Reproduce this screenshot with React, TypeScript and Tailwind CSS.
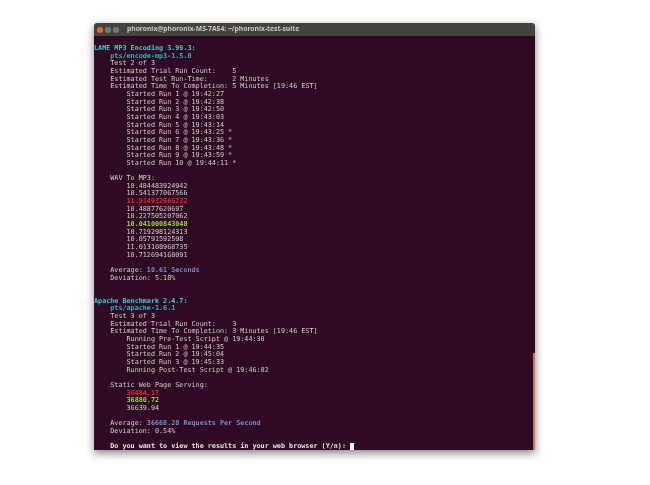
const mono = "font-['DejaVu_Sans_Mono','Liberation_Mono',monospace]";

type Seg = { text: string; color?: string };
type Line = Seg[] | string;

const CYAN = "text-[#45c8cc] font-bold";
const TEAL = "text-[#2fb6ba] font-bold";
const BLUE = "text-[#6f8fc4] font-bold";
const RED = "text-[#e8272c] font-bold";
const GREEN = "text-[#9bd83c] font-bold";

const lines: Line[] = [
  [{ text: "LAME MP3 Encoding 3.99.3:", color: CYAN }],
  [{ text: "    pts/encode-mp3-1.5.0", color: TEAL }],
  "    Test 2 of 3",
  "    Estimated Trial Run Count:    5",
  "    Estimated Test Run-Time:      2 Minutes",
  "    Estimated Time To Completion: 5 Minutes [19:46 EST]",
  "        Started Run 1 @ 19:42:27",
  "        Started Run 2 @ 19:42:38",
  "        Started Run 3 @ 19:42:50",
  "        Started Run 4 @ 19:43:03",
  "        Started Run 5 @ 19:43:14",
  "        Started Run 6 @ 19:43:25 *",
  "        Started Run 7 @ 19:43:36 *",
  "        Started Run 8 @ 19:43:48 *",
  "        Started Run 9 @ 19:43:59 *",
  "        Started Run 10 @ 19:44:11 *",
  "",
  "    WAV To MP3:",
  "        10.484483924942",
  "        10.541377067566",
  [{ text: "        11.914932966232", color: RED }],
  "        10.48877620697",
  "        10.227505207062",
  [{ text: "        10.041000843048", color: GREEN }],
  "        10.719298124313",
  "        10.05791592598",
  "        11.013108968735",
  "        10.712694168091",
  "",
  [{ text: "    Average: " }, { text: "10.61 Seconds", color: BLUE }],
  "    Deviation: 5.18%",
  "",
  "",
  [{ text: "Apache Benchmark 2.4.7:", color: CYAN }],
  [{ text: "    pts/apache-1.6.1", color: TEAL }],
  "    Test 3 of 3",
  "    Estimated Trial Run Count:    3",
  "    Estimated Time To Completion: 3 Minutes [19:46 EST]",
  "        Running Pre-Test Script @ 19:44:30",
  "        Started Run 1 @ 19:44:35",
  "        Started Run 2 @ 19:45:04",
  "        Started Run 3 @ 19:45:33",
  "        Running Post-Test Script @ 19:46:02",
  "",
  "    Static Web Page Serving:",
  [{ text: "        36484.17", color: RED }],
  [{ text: "        36880.72", color: GREEN }],
  "        36639.94",
  "",
  [{ text: "    Average: " }, { text: "36668.28 Requests Per Second", color: BLUE }],
  "    Deviation: 0.54%",
  "",
];

function TermLine({ line }: { line: Line }) {
  const segs = typeof line === "string" ? [{ text: line }] : line;
  return (
    <div className="h-[7.67px] whitespace-pre">
      {segs.map((s, i) => (
        <span key={i} className={s.color}>
          {s.text}
        </span>
      ))}
    </div>
  );
}

export default function App() {
  return (
    <div className="h-[485px] w-[650px] overflow-hidden bg-white pt-[23px] pl-[94px]">
      <div className="flex h-[427px] w-[441px] flex-col overflow-hidden rounded-t-[3px] shadow-[0_3px_9px_rgba(0,0,0,0.5)]">
        <div className="flex h-[13px] shrink-0 items-center bg-[#44433e]">
          <div className="ml-[3px] flex w-[30px] items-center gap-[2px]">
            <span className="h-[6px] w-[6px] rounded-full bg-[#e2693c]" />
            <span className="h-[6px] w-[6px] rounded-full bg-[#777670]" />
            <span className="h-[6px] w-[6px] rounded-full bg-[#777670]" />
          </div>
          <span className="font-['Noto_Sans',sans-serif] text-[6.75px] font-bold leading-none text-[#c9c7c0] blur-[0.3px]">
            phoronix@phoronix-MS-7A54: ~/phoronix-test-suite
          </span>
        </div>
        <div className="relative flex-1 bg-[#300a24] pt-[9px]">
          <div className={`${mono} text-[6.76px] leading-[7.67px] text-[#cfcfc8] blur-[0.4px]`}>
            {lines.map((line, i) => (
              <TermLine key={i} line={line} />
            ))}
            <div className="flex h-[7.67px] items-center whitespace-pre font-bold text-[#e6e6e0]">
              <span>{"    Do you want to view the results in your web browser (Y/n): "}</span>
              <span className="h-[8px] w-[4px] bg-white" />
            </div>
          </div>
          <div className="absolute right-0 bottom-0 h-[98px] w-[2px] bg-[#c9785c]" />
        </div>
      </div>
    </div>
  );
}
